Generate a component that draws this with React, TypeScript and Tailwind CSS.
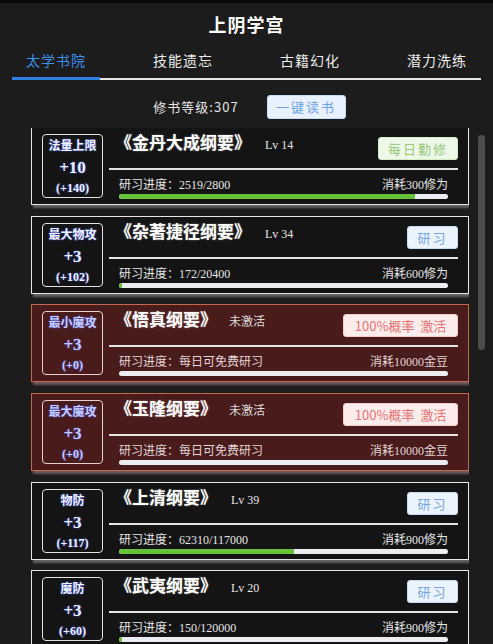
import React from "react";

type Book = {
  stat: string;
  value: string;
  sub: string;
  title: string;
  lv?: number;
  action: "daily" | "study" | "activate";
  progress: string;
  cost: string;
  pct: number;
};

const BOOKS: Book[] = [
  { stat: "法量上限", value: "+10", sub: "(+140)", title: "《金丹大成纲要》", lv: 14, action: "daily", progress: "2519/2800", cost: "消耗300修为", pct: 2519 / 2800 },
  { stat: "最大物攻", value: "+3", sub: "(+102)", title: "《杂著捷径纲要》", lv: 34, action: "study", progress: "172/20400", cost: "消耗600修为", pct: 172 / 20400 },
  { stat: "最小魔攻", value: "+3", sub: "(+0)", title: "《悟真纲要》", action: "activate", progress: "每日可免费研习", cost: "消耗10000金豆", pct: 0 },
  { stat: "最大魔攻", value: "+3", sub: "(+0)", title: "《玉隆纲要》", action: "activate", progress: "每日可免费研习", cost: "消耗10000金豆", pct: 0 },
  { stat: "物防", value: "+3", sub: "(+117)", title: "《上清纲要》", lv: 39, action: "study", progress: "62310/117000", cost: "消耗900修为", pct: 62310 / 117000 },
  { stat: "魔防", value: "+3", sub: "(+60)", title: "《武夷纲要》", lv: 20, action: "study", progress: "150/120000", cost: "消耗900修为", pct: 150 / 120000 },
];

const TABS = ["太学书院", "技能遗忘", "古籍幻化", "潜力洗练"];

const SERIF = "font-['Liberation_Serif','Noto_Sans_CJK_SC',serif]";
const SANS = "font-['Noto_Sans_CJK_SC','Liberation_Sans',sans-serif]";

function ActionButton({ kind }: { kind: Book["action"] }) {
  if (kind === "daily")
    return (
      <button className={`${SANS} w-[80px] h-[23px] rounded-[3px] border border-[#d4ecc4] bg-[#eef8e8] text-[13px] leading-none text-[#95c97a] tracking-[2px]`}>
        每日勤修
      </button>
    );
  if (kind === "activate")
    return (
      <button className={`${SANS} w-[115px] h-[23px] rounded-[3px] border border-[#f6cccc] bg-[#fdecec] text-[13px] leading-none text-[#e57373]`}>
        100%概率&nbsp;&nbsp;激活
      </button>
    );
  return (
    <button className={`${SANS} w-[51px] h-[23px] rounded-[3px] border border-[#c4dcf7] bg-[#eaf3fe] text-[13px] leading-none text-[#76a6e4] tracking-[2px]`}>
      研习
    </button>
  );
}

function BookCard({ b, first }: { b: Book; first?: boolean }) {
  const red = b.action === "activate";
  return (
    <div
      className={`${first ? "-mt-[1px]" : ""} shrink-0 h-[78px] flex px-[10px] pt-[6px] border ${
        red
          ? "bg-[#4a1b1b] border-[#c4694f] shadow-[2px_3px_2px_rgba(190,150,150,0.5)]"
          : "bg-[#141414] border-[#e6e6e6] shadow-[2px_3px_2px_rgba(170,170,170,0.5)]"
      }`}
    >
      {/* stat box */}
      <div
        className={`${SERIF} w-[61px] h-[64px] shrink-0 rounded-[4px] border ${
          red ? "border-[#e8d0d0]" : "border-[#e2e2e2]"
        } flex flex-col items-center font-bold ${
          red ? "text-[#c9ccff]" : "text-[#eef1ff]"
        } [text-shadow:0_0_2px_#3f5bff]`}
      >
        <div className="text-[12px] leading-[16px] mt-[3px]">{b.stat}</div>
        <div className="text-[17px] leading-[20px] mt-[4px]">{b.value}</div>
        <div className="text-[12px] leading-[16px] mt-[2px]">{b.sub}</div>
      </div>

      {/* content */}
      <div className="flex-1 ml-[6px] flex flex-col">
        <div className="h-[34px] flex items-start justify-between">
          <div className="flex items-baseline pl-[6px]">
            <span className={`${SERIF} text-[17px] leading-[20px] font-bold text-white [text-shadow:0_0_2px_rgba(255,255,255,0.4)]`}>
              {b.title}
            </span>
            {b.lv !== undefined ? (
              <span className={`${SERIF} ml-[14px] text-[12px] text-[#e8e8e8]`}>Lv {b.lv}</span>
            ) : (
              <span className={`${SANS} ml-[12px] text-[12px] text-[#dcdcdc]`}>未激活</span>
            )}
          </div>
          <div className="mt-[1px]">
            <ActionButton kind={b.action} />
          </div>
        </div>
        <div className="h-[2px] bg-[#e4e4e4]" />
        <div className={`${SERIF} mt-[7px] px-[10px] flex justify-between text-[12px] leading-[16px] ${red ? "text-[#e2d6d6]" : "text-[#e6e6e6]"}`}>
          <span>研习进度：{b.progress}</span>
          <span>{b.cost}</span>
        </div>
        <div className="mx-[10px] mt-[1px] h-[5px] rounded-full bg-[#ebedf2] overflow-hidden">
          <div className="h-full bg-[#67c23a] rounded-l-full" style={{ width: `${b.pct * 100}%`, minWidth: b.pct > 0 ? 3 : 0 }} />
        </div>
      </div>
    </div>
  );
}

export default function App() {
  return (
    <div className={`${SANS} w-[493px] h-[644px] bg-[#1c1c1c] flex flex-col overflow-hidden border-t-[3px] border-[#080808]`}>
      {/* Title */}
      <div className="h-[42px] flex items-center justify-center pt-[4px]">
        <h1 className={`${SERIF} text-[18px] font-bold text-white tracking-[1px]`}>上阴学宫</h1>
      </div>

      {/* Tabs */}
      <div className="mx-[12px] flex justify-between border-b-2 border-[#e6e6e6] h-[35px]">
        {TABS.map((t, i) => (
          <div
            key={t}
            className={`w-[88px] flex items-start justify-center pt-[5px] text-[14px] leading-[20px] tracking-[1px] ${
              i === 0 ? "text-[#3d8ee8] border-b-[3px] border-[#2f80e0] -mb-[2px]" : "text-[#ececec]"
            }`}
          >
            {t}
          </div>
        ))}
      </div>

      {/* Level row */}
      <div className="h-[48px] flex items-center justify-center pt-[5px] pl-[6px]">
        <span className="text-[13px] text-[#e6e6e6] tracking-[1px]">修书等级:307</span>
        <button className="ml-[28px] w-[79px] h-[24px] rounded-[3px] border border-[#c4dcf7] bg-[#e8f2fe] text-[13px] text-[#6fa2e6] tracking-[2px]">
          一键读书
        </button>
      </div>

      {/* List + scrollbar */}
      <div className="flex-1 flex min-h-0">
        <div className="ml-[31px] w-[438px] flex flex-col gap-[10.7px] overflow-hidden pb-[4px]">
          {BOOKS.map((b, i) => (
            <BookCard key={b.title} b={b} first={i === 0} />
          ))}
        </div>
        <div className="ml-[9px] w-[7px] pt-[7px]">
          <div className="h-[215px] rounded-full bg-[#4c4c4c]" />
        </div>
      </div>
    </div>
  );
}
